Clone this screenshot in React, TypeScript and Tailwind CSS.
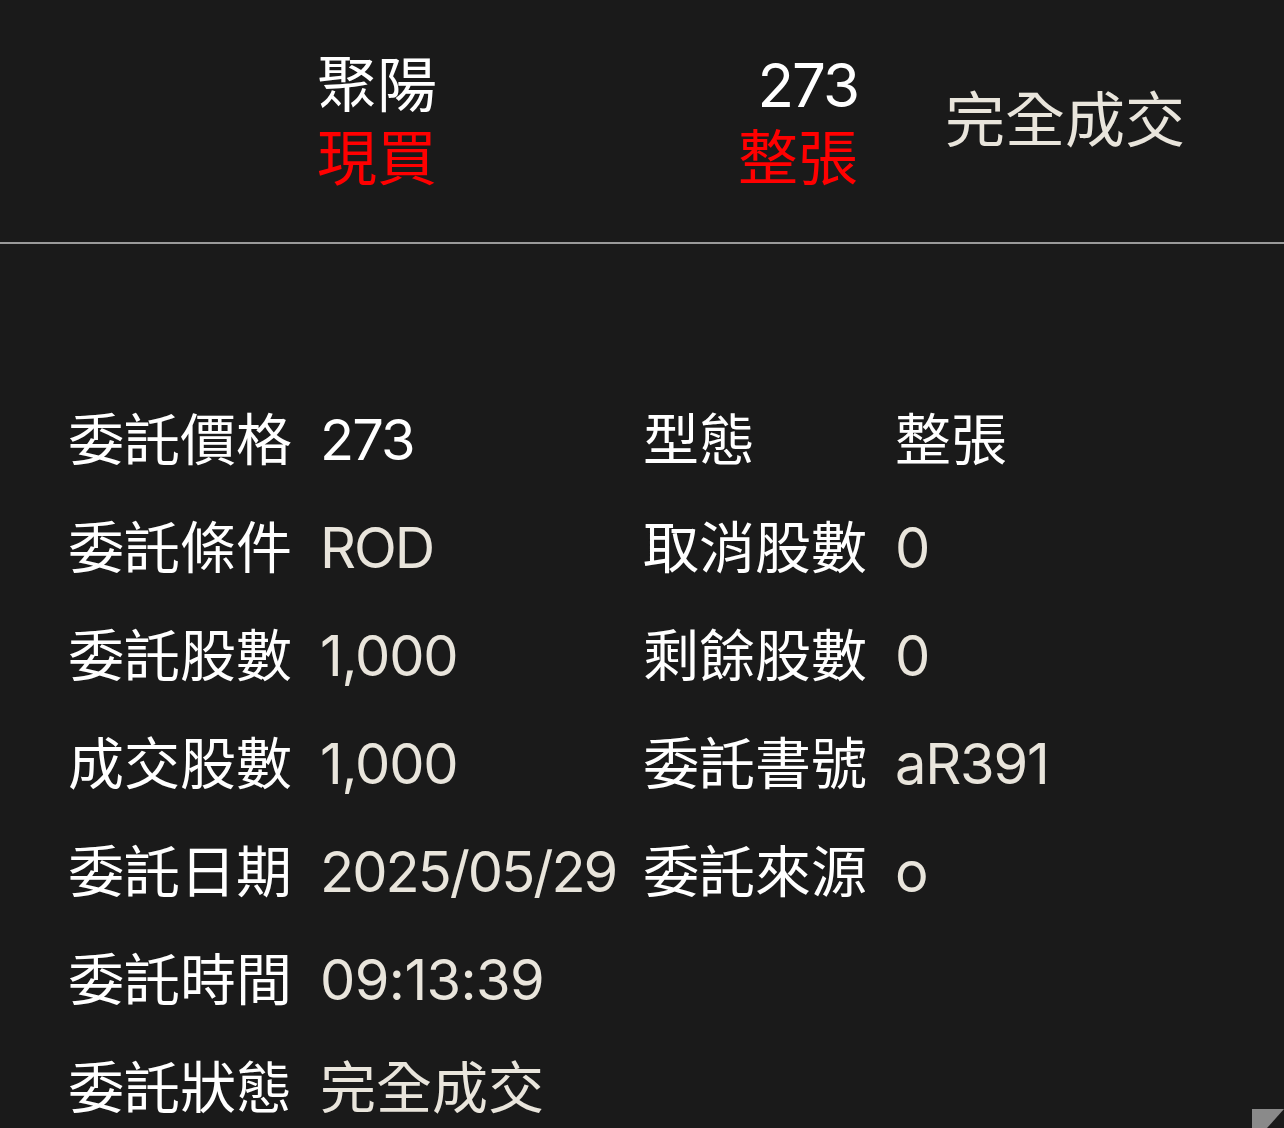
import React from 'react';

type Cell = { text: string; tone?: 'white' | 'cream'; track?: string };

const rows: { l1: string; v1: Cell; l2?: string; v2?: Cell }[] = [
  { l1: '委託價格', v1: { text: '273', tone: 'white', track: 'tracking-[-2px]' }, l2: '型態', v2: { text: '整張', tone: 'white' } },
  { l1: '委託條件', v1: { text: 'ROD', track: 'tracking-[-2px]' }, l2: '取消股數', v2: { text: '0', track: 'tracking-[-2px]' } },
  { l1: '委託股數', v1: { text: '1,000', track: 'tracking-[-1.2px]' }, l2: '剩餘股數', v2: { text: '0', track: 'tracking-[-2px]' } },
  { l1: '成交股數', v1: { text: '1,000', track: 'tracking-[-1.2px]' }, l2: '委託書號', v2: { text: 'aR391', track: 'tracking-[-1.2px]' } },
  { l1: '委託日期', v1: { text: '2025/05/29', track: 'tracking-[-2px]' }, l2: '委託來源', v2: { text: 'o', track: 'tracking-[-2px]' } },
  { l1: '委託時間', v1: { text: '09:13:39', track: 'tracking-[-0.6px]' } },
  { l1: '委託狀態', v1: { text: '完全成交' } },
];

function Value({ cell }: { cell?: Cell }) {
  if (!cell) return <div />;
  const color = cell.tone === 'white' ? 'text-white' : 'text-[#e9e5dc]';
  return <div className={`${color} ${cell.track ?? ''} whitespace-nowrap`}>{cell.text}</div>;
}

export default function App() {
  return (
    <div
      className="relative w-[1284px] h-[1128px] overflow-hidden bg-[#1a1a1a]"
      style={{ fontFamily: 'Inter, "Noto Sans CJK TC", sans-serif' }}
    >
      <div className="h-[242px] flex items-center pl-[317px] pb-[1px]">
        <div className="w-[541px] flex flex-col text-[60px] leading-[73px] mt-[2px]">
          <div className="flex justify-between text-white">
            <span>聚陽</span>
            <span className="tracking-[-2px]">273</span>
          </div>
          <div className="flex justify-between text-[#ff0000]">
            <span>現買</span>
            <span>整張</span>
          </div>
        </div>
        <div className="ml-[87px] text-[60px] leading-[73px] text-[#e9e5dc]">完全成交</div>
      </div>
      <div className="h-[2px] bg-[#9a9a9a]" />

      <div className="pt-[142px] pl-[68px] grid grid-cols-[252px_323px_252px_1fr] text-[56px] leading-[108px]">
        {rows.map((r, i) => (
          <React.Fragment key={i}>
            <div className="text-white whitespace-nowrap">{r.l1}</div>
            <Value cell={r.v1} />
            <div className="text-white whitespace-nowrap">{r.l2 ?? ''}</div>
            <Value cell={r.v2} />
          </React.Fragment>
        ))}
      </div>

      <svg className="absolute right-0 bottom-0" width="32" height="19" viewBox="0 0 32 19">
        <polygon points="0,0 32,0 15,19 0,19" fill="#8a8a8a" />
      </svg>
    </div>
  );
}
